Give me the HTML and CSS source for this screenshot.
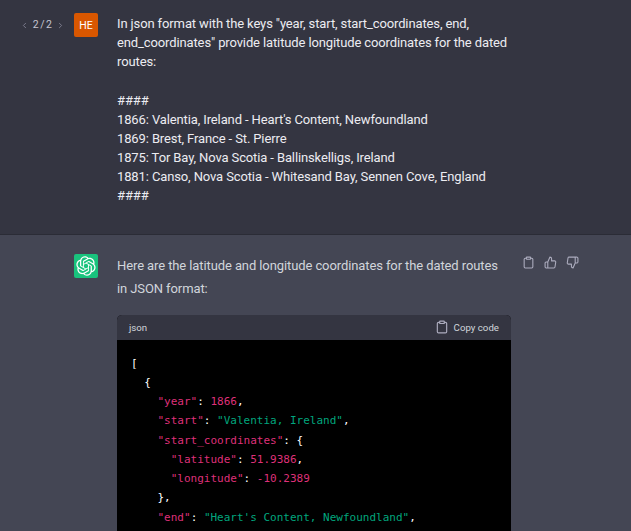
FILE: index.html
```html
<!DOCTYPE html>
<html lang="en">
<head>
<meta charset="utf-8">
<title>Chat</title>
<link rel="stylesheet" href="styles.css">
</head>
<body>
<section class="turn user">
  <div class="pager">
    <svg class="chev" viewBox="0 0 24 24"><polyline points="15 18 9 12 15 6"/></svg>
    <span>2 / 2</span>
    <svg class="chev" viewBox="0 0 24 24"><polyline points="9 18 15 12 9 6"/></svg>
  </div>
  <div class="avatar he">HE</div>
  <div class="prompt">In json format with the keys "year, start, start_coordinates, end, end_coordinates" provide latitude longitude coordinates for the dated routes:

####
1866: Valentia, Ireland - Heart's Content, Newfoundland
1869: Brest, France - St. Pierre
1875: Tor Bay, Nova Scotia - Ballinskelligs, Ireland
1881: Canso, Nova Scotia - Whitesand Bay, Sennen Cove, England
####</div>
</section>
<section class="turn bot">
  <div class="avatar gpt">
    <svg viewBox="0 0 41 41"><path fill="currentColor" d="M37.5324 16.8707C37.9808 15.5241 38.1363 14.0974 37.9886 12.6859C37.8409 11.2744 37.3934 9.91076 36.676 8.68622C35.6126 6.83404 33.9882 5.3676 32.0373 4.4985C30.0864 3.62941 27.9098 3.40259 25.8215 3.85078C24.8796 2.7893 23.7219 1.94125 22.4257 1.36341C21.1295 0.785575 19.7249 0.491269 18.3058 0.500197C16.1708 0.495044 14.0893 1.16803 12.3614 2.42214C10.6335 3.67624 9.34853 5.44666 8.6917 7.47815C7.30085 7.76286 5.98686 8.3414 4.8377 9.17505C3.68854 10.0087 2.73073 11.0782 2.02839 12.312C0.956464 14.1591 0.498905 16.2988 0.721698 18.4228C0.944492 20.5467 1.83612 22.5449 3.268 24.1293C2.81966 25.4759 2.66413 26.9026 2.81182 28.3141C2.95951 29.7256 3.40701 31.0892 4.12437 32.3138C5.18791 34.1659 6.8123 35.6322 8.76321 36.5013C10.7141 37.3704 12.8907 37.5973 14.9789 37.1492C15.9208 38.2107 17.0786 39.0587 18.3747 39.6366C19.6709 40.2144 21.0755 40.5087 22.4946 40.4998C24.6307 40.5054 26.7133 39.8321 28.4418 38.5772C30.1704 37.3223 31.4556 35.5506 32.1119 33.5179C33.5027 33.2332 34.8167 32.6547 35.9659 31.821C37.115 30.9874 38.0728 29.9178 38.7752 28.684C39.8458 26.8371 40.3023 24.6979 40.0789 22.5748C39.8556 20.4517 38.9639 18.4544 37.5324 16.8707ZM22.4978 37.8849C20.7443 37.8874 19.0459 37.2733 17.6994 36.1501C17.7601 36.117 17.8666 36.0586 17.936 36.0161L25.9004 31.4156C26.1003 31.3019 26.2663 31.137 26.3813 30.9378C26.4964 30.7386 26.5563 30.5124 26.5549 30.2825V19.0542L29.9213 20.998C29.9389 21.0068 29.9541 21.0198 29.9656 21.0359C29.977 21.052 29.9842 21.0707 29.9867 21.0902V30.3889C29.9842 32.375 29.1946 34.2791 27.7909 35.6841C26.3872 37.0892 24.4838 37.8806 22.4978 37.8849ZM6.39227 31.0064C5.51397 29.4888 5.19742 27.7107 5.49804 25.9832C5.55718 26.0187 5.66048 26.0818 5.73461 26.1244L13.699 30.7248C13.8975 30.8408 14.1233 30.902 14.3532 30.902C14.583 30.902 14.8088 30.8408 15.0073 30.7248L24.731 25.1103V28.9979C24.7321 29.0177 24.7283 29.0376 24.7199 29.0556C24.7115 29.0736 24.6988 29.0893 24.6829 29.1012L16.6317 33.7497C14.9096 34.7416 12.8643 35.0097 10.9447 34.4954C9.02506 33.9811 7.38785 32.7263 6.39227 31.0064ZM4.29707 13.6194C5.17156 12.0998 6.55279 10.9364 8.19885 10.3327C8.19885 10.4013 8.19491 10.5228 8.19491 10.6071V19.808C8.19351 20.0378 8.25334 20.2638 8.36823 20.4629C8.48312 20.6619 8.64893 20.8267 8.84863 20.9404L18.5723 26.5542L15.206 28.4979C15.1894 28.5089 15.1703 28.5155 15.1505 28.5173C15.1307 28.5191 15.1107 28.516 15.0924 28.5082L7.04046 23.8557C5.32135 22.8601 4.06716 21.2235 3.55289 19.3046C3.03862 17.3858 3.30624 15.3413 4.29707 13.6194ZM31.955 20.0556L22.2312 14.4411L25.5976 12.4981C25.6142 12.4872 25.6333 12.4805 25.6531 12.4787C25.6729 12.4769 25.6928 12.4801 25.7111 12.4879L33.7631 17.1364C34.9967 17.849 36.0017 18.8982 36.6606 20.1613C37.3194 21.4244 37.6047 22.849 37.4832 24.2684C37.3617 25.6878 36.8382 27.0432 35.9743 28.1759C35.1103 29.3086 33.9415 30.1717 32.6047 30.6641C32.6047 30.5947 32.6047 30.4733 32.6047 30.3889V21.188C32.6066 20.9586 32.5474 20.7328 32.4332 20.5338C32.319 20.3348 32.154 20.1698 31.955 20.0556ZM35.3055 15.0128C35.2464 14.9765 35.1431 14.9142 35.069 14.8717L27.1045 10.2712C26.906 10.1554 26.6803 10.0943 26.4504 10.0943C26.2206 10.0943 25.9948 10.1554 25.7963 10.2712L16.0726 15.8858V11.9982C16.0715 11.9783 16.0753 11.9585 16.0837 11.9405C16.0921 11.9225 16.1048 11.9068 16.1207 11.8949L24.1719 7.25025C25.4053 6.53903 26.8158 6.19376 28.2383 6.25482C29.6608 6.31589 31.0364 6.78077 32.2044 7.59508C33.3723 8.40939 34.2842 9.53945 34.8334 10.8531C35.3826 12.1667 35.5464 13.6095 35.3055 15.0128ZM14.2424 21.9419L10.8752 19.9981C10.8576 19.9893 10.8423 19.9763 10.8309 19.9602C10.8195 19.9441 10.8122 19.9254 10.8098 19.9058V10.6071C10.8107 9.18295 11.2173 7.78848 11.9819 6.58696C12.7466 5.38544 13.8377 4.42659 15.1275 3.82264C16.4173 3.21869 17.8524 2.99464 19.2649 3.1767C20.6775 3.35876 22.0089 3.93941 23.1034 4.85067C23.0427 4.88379 22.937 4.94215 22.8668 4.98473L14.9024 9.58517C14.7025 9.69878 14.5366 9.86356 14.4215 10.0626C14.3065 10.2616 14.2466 10.4877 14.2479 10.7175L14.2424 21.9419ZM16.071 17.9991L20.4018 15.4978L24.7325 17.9975V22.9985L20.4018 25.4983L16.071 22.9985V17.9991Z"/></svg>
  </div>
  <div class="answer">
    <p class="intro">Here are the latitude and longitude coordinates for the dated routes in JSON format:</p>
    <div class="code">
      <div class="code-head">
        <span>json</span>
        <span class="copy">
          <svg class="ico" viewBox="0 0 24 24"><path d="M16 4h2a2 2 0 0 1 2 2v14a2 2 0 0 1-2 2H6a2 2 0 0 1-2-2V6a2 2 0 0 1 2-2h2"/><rect x="8" y="2" width="8" height="4" rx="1"/></svg>
          Copy code
        </span>
      </div>
<pre class="code-body"><span class="p">[</span>
  <span class="p">{</span>
    <span class="k">"year"</span><span class="p">:</span> <span class="n">1866</span><span class="p">,</span>
    <span class="k">"start"</span><span class="p">:</span> <span class="s">"Valentia, Ireland"</span><span class="p">,</span>
    <span class="k">"start_coordinates"</span><span class="p">:</span> <span class="p">{</span>
      <span class="k">"latitude"</span><span class="p">:</span> <span class="n">51.9386</span><span class="p">,</span>
      <span class="k">"longitude"</span><span class="p">:</span> <span class="n">-10.2389</span>
    <span class="p">},</span>
    <span class="k">"end"</span><span class="p">:</span> <span class="s">"Heart's Content, Newfoundland"</span><span class="p">,</span></pre>
    </div>
  </div>
  <div class="actions">
    <svg class="ico" viewBox="0 0 24 24"><path d="M16 4h2a2 2 0 0 1 2 2v14a2 2 0 0 1-2 2H6a2 2 0 0 1-2-2V6a2 2 0 0 1 2-2h2"/><rect x="8" y="2" width="8" height="4" rx="1"/></svg>
    <svg class="ico" viewBox="0 0 24 24"><path d="M14 9V5a3 3 0 0 0-3-3l-4 9v11h11.28a2 2 0 0 0 2-1.7l1.38-9a2 2 0 0 0-2-2.3zM7 22H4a2 2 0 0 1-2-2v-7a2 2 0 0 1 2-2h3"/></svg>
    <svg class="ico" viewBox="0 0 24 24"><path d="M10 15v4a3 3 0 0 0 3 3l4-9V2H5.72a2 2 0 0 0-2 1.7l-1.38 9a2 2 0 0 0 2 2.3zm7-13h2.67A2.31 2.31 0 0 1 22 4v7a2.31 2.31 0 0 1-2.33 2H17"/></svg>
  </div>
</section>
</body>
</html>
```
FILE: styles.css
```css
* { box-sizing: border-box; }
html, body { margin: 0; height: 100%; overflow: hidden; }
body {
  background: #444654;
  font-family: Roboto, "Liberation Sans", sans-serif;
  font-size: 13px;
  color: #d1d5db;
}
.turn {
  display: grid;
  grid-template-columns: 74px 24px 19px 394px 10.5px auto;
  align-items: start;
}
.user {
  background: #343541;
  border-bottom: 1px solid #2b2c36;
  height: 235px;
  padding-top: 13px;
}
.bot { padding-top: 19px; }
.pager {
  grid-column: 1;
  display: flex;
  align-items: center;
  justify-content: flex-end;
  gap: 3.5px;
  padding: 3px 9.5px 0 0;
  font-size: 10.5px;
  line-height: 18px;
  word-spacing: -1px;
  color: #c5c5d2;
}
.chev {
  width: 9px;
  height: 9px;
  fill: none;
  stroke: #8e8ea0;
  stroke-width: 2;
  stroke-linecap: round;
  stroke-linejoin: round;
}
.avatar {
  grid-column: 2;
  width: 24px;
  height: 24px;
  border-radius: 2px;
  display: flex;
  align-items: center;
  justify-content: center;
  color: #fff;
}
.he { background: #d95700; font-size: 10.5px; }
.gpt { background: #19c37d; }
.gpt svg { width: 20px; height: 20px; }
.prompt {
  grid-column: 4;
  white-space: pre-wrap;
  line-height: 19.15px;
  letter-spacing: -0.12px;
  color: #ececf1;
  padding-top: 1px;
}
.answer { grid-column: 4; }
.intro {
  margin: 0 0 14px;
  line-height: 22.75px;
  letter-spacing: -0.1px;
  padding-top: 1px;
}
.code { border-radius: 5px; overflow: hidden; background: #000; }
.code-head {
  display: flex;
  justify-content: space-between;
  align-items: center;
  height: 25px;
  padding: 0 12px;
  background: #343541;
  font-size: 9.7px;
  color: #d1d5db;
}
.copy { display: flex; align-items: center; gap: 5px; }
.code-body {
  margin: 0;
  padding: 14px 14px;
  font-family: "DejaVu Sans Mono", "Liberation Mono", monospace;
  font-size: 11px;
  line-height: 19.25px;
  color: #fff;
  overflow: hidden;
}
.p { color: #fff; }
.k { color: #df3079; }
.n { color: #df3079; }
.s { color: #00a67d; }
.actions {
  grid-column: 6;
  display: flex;
  gap: 9px;
  padding-top: 2px;
}
.ico {
  width: 14px;
  height: 14px;
  fill: none;
  stroke: #acacbe;
  stroke-width: 2;
  stroke-linecap: round;
  stroke-linejoin: round;
}
.actions .ico { width: 13px; height: 13px; }
```
